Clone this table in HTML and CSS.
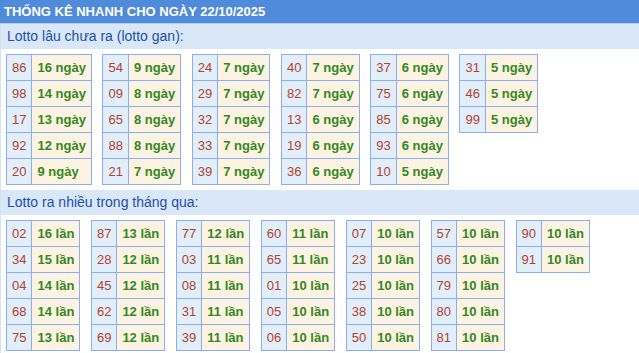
FILE: index.html
```html
<!DOCTYPE html>
<html lang="vi">
<head>
<meta charset="utf-8">
<title>Thống kê nhanh</title>
<link rel="stylesheet" href="styles.css">
</head>
<body>
<div class="box">
  <div class="title">THỐNG KÊ NHANH CHO NGÀY 22/10/2025</div>
  <div class="sub">Lotto lâu chưa ra (lotto gan):</div>
  <div class="tables">
    <table class="t"><tr><td class="n">86</td><td class="v">16 ngày</td></tr><tr><td class="n">98</td><td class="v">14 ngày</td></tr><tr><td class="n">17</td><td class="v">13 ngày</td></tr><tr><td class="n">92</td><td class="v">12 ngày</td></tr><tr><td class="n">20</td><td class="v">9 ngày</td></tr></table>
    <table class="t"><tr><td class="n">54</td><td class="v">9 ngày</td></tr><tr><td class="n">09</td><td class="v">8 ngày</td></tr><tr><td class="n">65</td><td class="v">8 ngày</td></tr><tr><td class="n">88</td><td class="v">8 ngày</td></tr><tr><td class="n">21</td><td class="v">7 ngày</td></tr></table>
    <table class="t"><tr><td class="n">24</td><td class="v">7 ngày</td></tr><tr><td class="n">29</td><td class="v">7 ngày</td></tr><tr><td class="n">32</td><td class="v">7 ngày</td></tr><tr><td class="n">33</td><td class="v">7 ngày</td></tr><tr><td class="n">39</td><td class="v">7 ngày</td></tr></table>
    <table class="t"><tr><td class="n">40</td><td class="v">7 ngày</td></tr><tr><td class="n">82</td><td class="v">7 ngày</td></tr><tr><td class="n">13</td><td class="v">6 ngày</td></tr><tr><td class="n">19</td><td class="v">6 ngày</td></tr><tr><td class="n">36</td><td class="v">6 ngày</td></tr></table>
    <table class="t"><tr><td class="n">37</td><td class="v">6 ngày</td></tr><tr><td class="n">75</td><td class="v">6 ngày</td></tr><tr><td class="n">85</td><td class="v">6 ngày</td></tr><tr><td class="n">93</td><td class="v">6 ngày</td></tr><tr><td class="n">10</td><td class="v">5 ngày</td></tr></table>
    <table class="t"><tr><td class="n">31</td><td class="v">5 ngày</td></tr><tr><td class="n">46</td><td class="v">5 ngày</td></tr><tr><td class="n">99</td><td class="v">5 ngày</td></tr></table>
  </div>
  <div class="sub">Lotto ra nhiều trong tháng qua:</div>
  <div class="tables">
    <table class="t"><tr><td class="n">02</td><td class="v">16 lần</td></tr><tr><td class="n">34</td><td class="v">15 lần</td></tr><tr><td class="n">04</td><td class="v">14 lần</td></tr><tr><td class="n">68</td><td class="v">14 lần</td></tr><tr><td class="n">75</td><td class="v">13 lần</td></tr></table>
    <table class="t"><tr><td class="n">87</td><td class="v">13 lần</td></tr><tr><td class="n">28</td><td class="v">12 lần</td></tr><tr><td class="n">45</td><td class="v">12 lần</td></tr><tr><td class="n">62</td><td class="v">12 lần</td></tr><tr><td class="n">69</td><td class="v">12 lần</td></tr></table>
    <table class="t"><tr><td class="n">77</td><td class="v">12 lần</td></tr><tr><td class="n">03</td><td class="v">11 lần</td></tr><tr><td class="n">08</td><td class="v">11 lần</td></tr><tr><td class="n">31</td><td class="v">11 lần</td></tr><tr><td class="n">39</td><td class="v">11 lần</td></tr></table>
    <table class="t"><tr><td class="n">60</td><td class="v">11 lần</td></tr><tr><td class="n">65</td><td class="v">11 lần</td></tr><tr><td class="n">01</td><td class="v">10 lần</td></tr><tr><td class="n">05</td><td class="v">10 lần</td></tr><tr><td class="n">06</td><td class="v">10 lần</td></tr></table>
    <table class="t"><tr><td class="n">07</td><td class="v">10 lần</td></tr><tr><td class="n">23</td><td class="v">10 lần</td></tr><tr><td class="n">25</td><td class="v">10 lần</td></tr><tr><td class="n">38</td><td class="v">10 lần</td></tr><tr><td class="n">50</td><td class="v">10 lần</td></tr></table>
    <table class="t"><tr><td class="n">57</td><td class="v">10 lần</td></tr><tr><td class="n">66</td><td class="v">10 lần</td></tr><tr><td class="n">79</td><td class="v">10 lần</td></tr><tr><td class="n">80</td><td class="v">10 lần</td></tr><tr><td class="n">81</td><td class="v">10 lần</td></tr></table>
    <table class="t"><tr><td class="n">90</td><td class="v">10 lần</td></tr><tr><td class="n">91</td><td class="v">10 lần</td></tr></table>
  </div>
</div>
</body>
</html>
```

FILE: styles.css
```css
html, body {
  margin: 0;
  padding: 0;
  background: #fff;
}
body {
  font-family: "Liberation Sans", Arial, sans-serif;
}
.box {
  width: 639px;
  border-left: 1px solid #d3e2f6;
  box-sizing: border-box;
}
.title {
  height: 23px;
  line-height: 23px;
  background: #508bdb;
  color: #fff;
  font-size: 13px;
  font-weight: bold;
  padding-left: 4px;
  border-bottom: 1px solid #b4cdef;
  margin-left: -1px;
}
.sub {
  height: 25px;
  line-height: 25px;
  background: #d9e7f9;
  color: #1f4fae;
  font-size: 14px;
  padding-left: 6px;
}
.tables {
  display: flex;
  align-items: flex-start;
  gap: 10.6px;
  padding: 5px 5px 5px 5px;
}
.t {
  border-collapse: collapse;
  font-size: 13px;
}
.t td {
  border: 1px solid #8cadf4;
  height: 25px;
  padding: 0 5px;
  box-sizing: border-box;
  white-space: nowrap;
}
.t tr {
  height: 26px;
}
.n {
  background: #e3eefb;
  color: #b1432d;
}
.v {
  background: #fdf3e3;
  color: #33881e;
  font-weight: bold;
}
```
